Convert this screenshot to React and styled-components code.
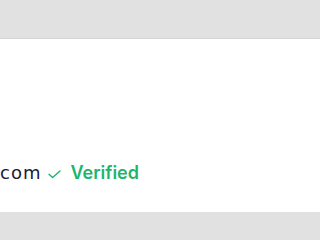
import styled, { createGlobalStyle } from "styled-components";

const Global = createGlobalStyle`
    html, body {
        margin: 0;
        padding: 0;
        background-color: #E1E1E1;
    }
`;

const Page = styled.div`
    width: 100%;
    display: flex;
    flex-direction: column;
    background-color: #E1E1E1;
    font-family: 'Inter', 'Liberation Sans', sans-serif;
`;

const TopBar = styled.div`
    height: 38px;
    background-color: #E1E1E1;
    border-bottom: 1px solid #D6D6D6;
`;

const Card = styled.div`
    height: 173px;
    background-color: #FFFFFF;
    display: flex;
    flex-direction: column;
    justify-content: flex-end;
    padding-bottom: 29px;
    box-sizing: border-box;
`;

const EmailRow = styled.div`
    width: 220px;
    display: flex;
    justify-content: flex-end;
    align-items: baseline;
    gap: 6px;
    padding-right: 81px;
    box-sizing: border-box;
    white-space: nowrap;
    overflow: hidden;
`;

const Email = styled.span`
    font-family: 'DejaVu Sans', 'Liberation Sans', sans-serif;
    font-size: 18px;
    letter-spacing: 1px;
    color: #1B1B33;
`;

const Badge = styled.span`
    display: flex;
    align-items: baseline;
    gap: 10px;
    font-size: 18px;
    font-weight: 600;
    color: #1DB56C;

    svg {
        align-self: center;
        margin-top: 3px;
    }
`;

function Check() {
    return (
        <svg width="13" height="9" viewBox="0 0 13 9" fill="none">
            <path d="M1 4.2 L4.6 7.6 L12 1" stroke="#1DB56C" strokeWidth="1.4" strokeLinecap="round" strokeLinejoin="round" />
        </svg>
    );
}

export default function App() {
    return (
        <Page>
            <Global />
            <TopBar />
            <Card>
                <EmailRow>
                    <Email>jonathan.miller@example.com</Email>
                    <Badge><Check />Verified</Badge>
                </EmailRow>
            </Card>
        </Page>
    );
}
